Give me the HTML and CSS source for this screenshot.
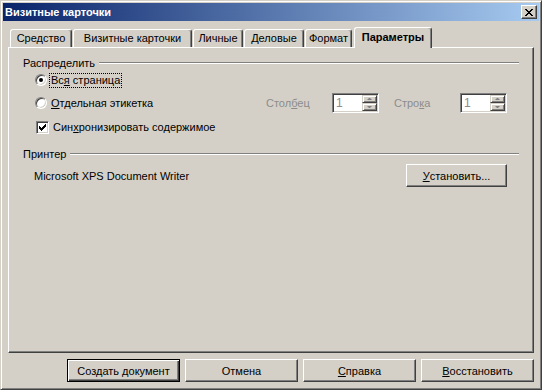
FILE: index.html
```html
<!DOCTYPE html>
<html>
<head>
    <meta charset="utf-8">
    <title>Визитные карточки</title>
    <link rel="stylesheet" href="styles.css">
</head>
<body>
<div class="window">
    <div class="titlebar">
        <span class="title">Визитные карточки</span>
        <span class="close">
            <svg width="8" height="7" viewBox="0 0 8 7" shape-rendering="crispEdges"><path fill="#000" d="M0 0h2v1H0zM6 0h2v1H6zM1 1h2v1H1zM5 1h2v1H5zM2 2h4v1H2zM3 3h2v1H3zM2 4h4v1H2zM1 5h2v1H1zM5 5h2v1H5zM0 6h2v1H0zM6 6h2v1H6z"/></svg>
        </span>
    </div>
    <div class="main">
        <div class="tabs">
            <div class="tab t1">Средство</div>
            <div class="tab t2">Визитные карточки</div>
            <div class="tab t3">Личные</div>
            <div class="tab t4">Деловые</div>
            <div class="tab t5">Формат</div>
            <div class="tab active">Параметры</div>
        </div>
        <div class="panel">
            <div class="group">
                <span>Распределить</span>
                <span class="rule"></span>
            </div>
            <div class="opt row1">
                <span class="radio checked"></span>
                <span class="lbl focus">Вс<u>я</u> страница</span>
            </div>
            <div class="opt row2">
                <span class="radio"></span>
                <span class="lbl"><u>О</u>тдельная этикетка</span>
                <div class="spins">
                    <span class="slabel">Стол<u>б</u>ец</span>
                    <div class="spin">
                        <span class="field">1</span>
                        <span class="arrows"><span class="sbtn"><i class="up"></i></span><span class="sbtn"><i class="down"></i></span></span>
                    </div>
                    <span class="slabel second">Стро<u>к</u>а</span>
                    <div class="spin">
                        <span class="field">1</span>
                        <span class="arrows"><span class="sbtn"><i class="up"></i></span><span class="sbtn"><i class="down"></i></span></span>
                    </div>
                </div>
            </div>
            <div class="opt row3">
                <span class="check">
                    <svg width="7" height="7" viewBox="0 0 7 7" shape-rendering="crispEdges"><path fill="#000" d="M6 0h1v1H6zM5 1h2v1H5zM0 2h1v1H0zM4 2h3v1H4zM0 3h2v1H0zM3 3h3v1H3zM0 4h5v1H0zM1 5h3v1H1zM2 6h1v1H2z"/></svg>
                </span>
                <span class="lbl">Син<u>х</u>ронизировать содержимое</span>
            </div>
            <div class="group printer-head">
                <span>Принтер</span>
                <span class="rule"></span>
            </div>
            <div class="printer">
                <span class="pname">Microsoft XPS Document Writer</span>
                <span class="button setup"><u>У</u>становить...</span>
            </div>
        </div>
        <div class="buttons">
            <span class="button default">Создать документ</span>
            <span class="button">Отмена</span>
            <span class="button"><u>С</u>правка</span>
            <span class="button"><u>В</u>осстановить</span>
        </div>
    </div>
</div>
</body>
</html>
```

FILE: styles.css
```css
body
{
    margin: 0;
    background-color: #d4d0c8;
    font-family: "Liberation Sans", Arial, sans-serif;
    font-size: 11px;
    color: #000;
}
u
{
    text-decoration: underline;
    text-underline-offset: 1px;
}
.window
{
    width: 542px;
    height: 390px;
    box-sizing: border-box;
    border: 1px solid;
    border-color: #d4d0c8 #404040 #404040 #d4d0c8;
    box-shadow: inset 1px 1px #fff, inset -1px -1px #808080;
    padding: 2px;
    background-color: #d4d0c8;
}
.titlebar
{
    height: 18px;
    display: flex;
    align-items: center;
    padding-left: 2px;
    background: linear-gradient(to right, #0a246a, #a6caf0);
    color: #fff;
    font-weight: bold;
}
.close
{
    margin-left: auto;
    margin-right: 2px;
    width: 16px;
    height: 14px;
    box-sizing: border-box;
    border: 1px solid;
    border-color: #fff #404040 #404040 #fff;
    box-shadow: inset -1px -1px #808080;
    background-color: #d4d0c8;
    display: flex;
    align-items: center;
    justify-content: center;
    padding-right: 1px;
}
.close svg
{
    display: block;
}
.main
{
    padding: 6px 5px 0;
}
.tabs
{
    display: flex;
    align-items: flex-end;
    height: 20px;
    padding-left: 2px;
}
.tab
{
    height: 18px;
    box-sizing: border-box;
    border: 1px solid;
    border-bottom: none;
    border-color: #fff #404040 #fff #fff;
    box-shadow: inset -1px 0 #808080;
    border-radius: 3px 3px 0 0;
    display: flex;
    align-items: center;
    justify-content: center;
    margin-right: 1px;
    padding-bottom: 1px;
}
.t1 { width: 62px; }
.t2 { width: 119px; }
.t3 { width: 50px; }
.t4 { width: 60px; }
.t5 { width: 47px; }
.tab.active
{
    width: 78px;
    height: 21px;
    margin-left: 1px;
    margin-bottom: -1px;
    position: relative;
    z-index: 2;
    background-color: #d4d0c8;
    font-weight: bold;
    padding-bottom: 2px;
}
.panel
{
    height: 306px;
    box-sizing: border-box;
    border: 1px solid;
    border-color: #fff #404040 #404040 #fff;
    box-shadow: inset -1px -1px #808080;
    padding: 8px 14px 0;
}
.group
{
    height: 13px;
    display: flex;
    align-items: center;
}
.rule
{
    flex: 1;
    height: 0;
    border-top: 1px solid #808080;
    border-bottom: 1px solid #fff;
    margin-left: 4px;
}
.opt
{
    display: flex;
    align-items: center;
    padding-left: 12px;
}
.row1 { height: 22px; }
.row2 { height: 24px; }
.row3 { height: 24px; padding-left: 13px; }
.lbl
{
    margin-left: 4px;
    line-height: 13px;
}
.focus
{
    outline: 1px dotted #000;
    outline-offset: 0;
    padding: 0 1px;
    margin-left: 3px;
}
.radio
{
    width: 12px;
    height: 12px;
    box-sizing: border-box;
    border: 1px solid;
    border-color: #808080 #fff #fff #808080;
    border-radius: 50%;
    background-color: #fff;
    box-shadow: inset 1px 1px #404040, inset -1px -1px #d4d0c8;
    position: relative;
}
.radio.checked::after
{
    content: "";
    position: absolute;
    left: 3px;
    top: 3px;
    width: 4px;
    height: 4px;
    border-radius: 50%;
    background-color: #000;
}
.check
{
    width: 13px;
    height: 13px;
    box-sizing: border-box;
    border: 1px solid;
    border-color: #808080 #fff #fff #808080;
    box-shadow: inset 1px 1px #404040, inset -1px -1px #d4d0c8;
    background-color: #fff;
    padding: 2px;
}
.check svg
{
    display: block;
}
.spins
{
    margin-left: auto;
    margin-right: 12px;
    display: flex;
    align-items: center;
}
.slabel
{
    width: 66px;
    color: #8c8c8c;
}
.slabel.second
{
    margin-left: 15px;
}
.spin
{
    width: 47px;
    height: 20px;
    box-sizing: border-box;
    border: 1px solid;
    border-color: #808080 #fff #fff #808080;
    box-shadow: inset 1px 1px #404040, inset -1px -1px #d4d0c8;
    background-color: #fff;
    padding: 1px;
    display: flex;
}
.field
{
    flex: 1;
    color: #8c8c8c;
    padding-left: 2px;
    line-height: 16px;
    font-size: 12px;
}
.arrows
{
    width: 15px;
    display: flex;
    flex-direction: column;
}
.sbtn
{
    height: 8px;
    box-sizing: border-box;
    border: 1px solid;
    border-color: #d4d0c8 #404040 #404040 #d4d0c8;
    box-shadow: inset 1px 1px #fff, inset -1px -1px #808080;
    background-color: #d4d0c8;
    display: flex;
    align-items: center;
    justify-content: center;
}
.up, .down
{
    width: 1px;
    height: 0;
    border-left: 2px solid transparent;
    border-right: 2px solid transparent;
}
.up
{
    border-bottom: 2px solid #808080;
}
.down
{
    border-top: 2px solid #808080;
}
.printer-head
{
    margin-top: 8px;
}
.printer
{
    margin-top: 4px;
    height: 23px;
    display: flex;
    align-items: center;
    padding-left: 11px;
}
.button
{
    width: 113px;
    height: 23px;
    box-sizing: border-box;
    border: 1px solid;
    border-color: #fff #404040 #404040 #fff;
    box-shadow: inset -1px -1px #808080;
    background-color: #d4d0c8;
    display: flex;
    align-items: center;
    justify-content: center;
}
.button.setup
{
    width: 101px;
    margin-left: auto;
    margin-right: 12px;
}
.button.default
{
    border-color: #000;
    box-shadow: inset 1px 1px #fff, inset -1px -1px #404040, inset -2px -2px #808080;
}
.buttons
{
    display: flex;
    justify-content: flex-end;
    gap: 5px;
    margin-top: 6px;
}
```
